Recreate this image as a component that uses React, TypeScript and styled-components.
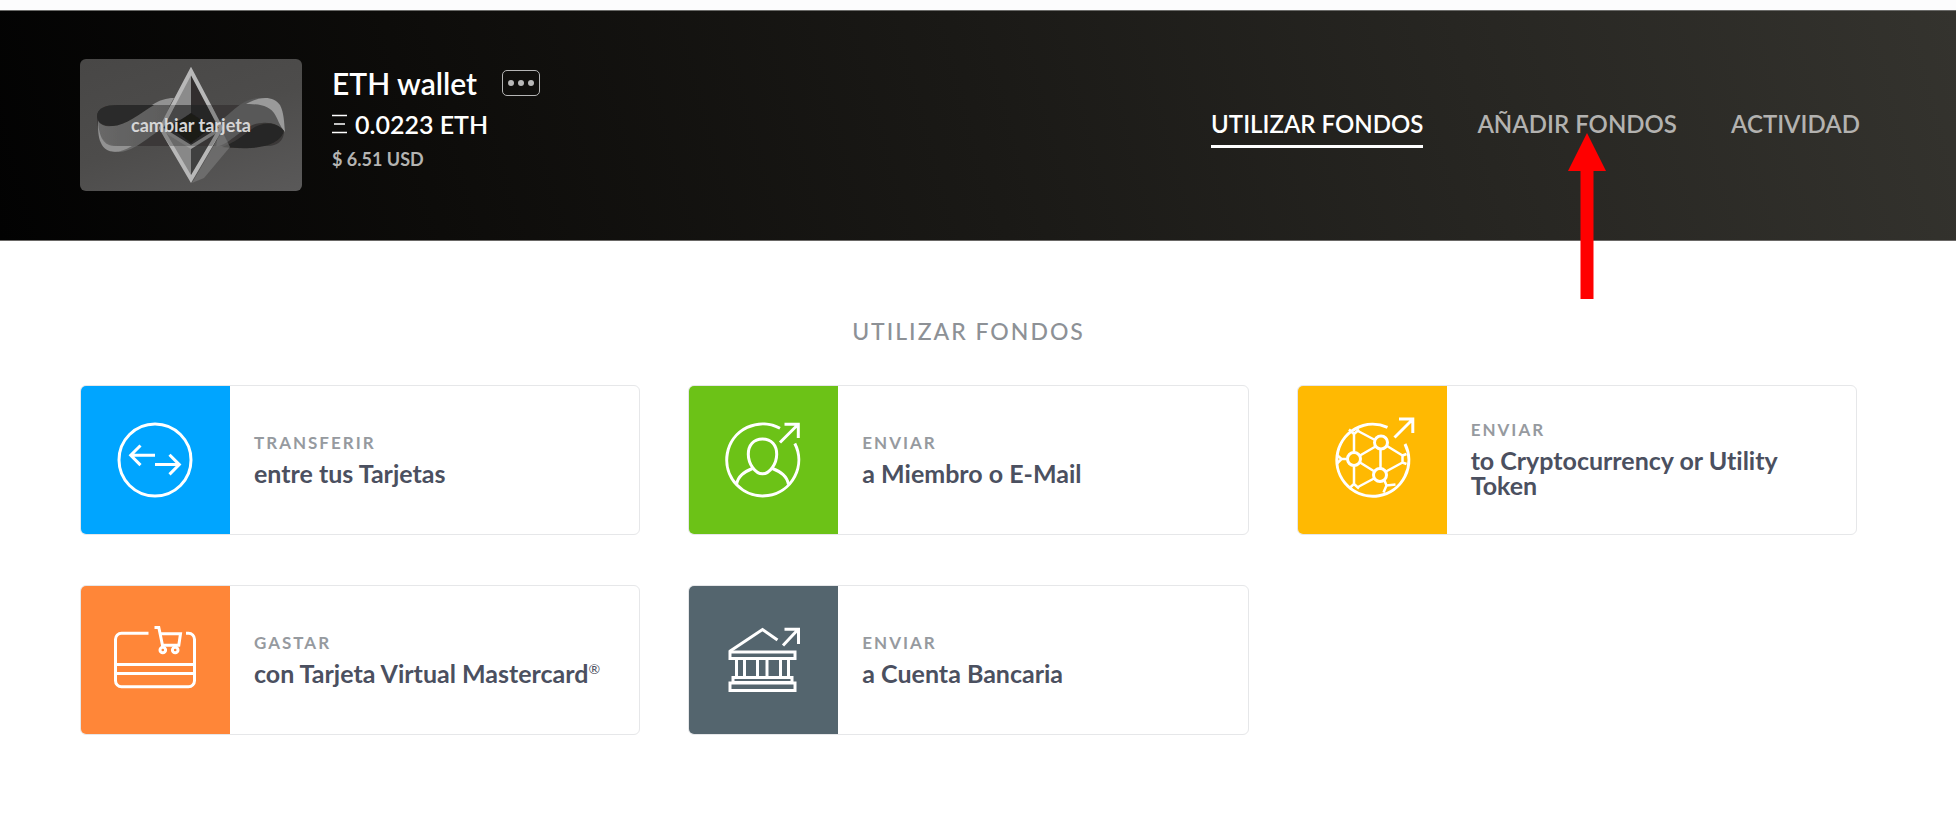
import React from "react";
import styled, { createGlobalStyle } from "styled-components";

const GlobalStyle = createGlobalStyle`
  *, *::before, *::after { box-sizing: border-box; }
  body {
    margin: 0;
    background: #fff;
    font-family: Lato, "Open Sans", sans-serif;
    font-variant-ligatures: none;
    color: #4b5060;
  }
`;

const Page = styled.div`
  border-top: 10px solid #fcfcfd;
`;

const Header = styled.header`
  display: flex;
  align-items: center;
  justify-content: space-between;
  gap: 32px;
  min-height: 231px;
  padding: 0 96px 2px 80px;
  border-top: 1px solid #6a6a68;
  border-bottom: 1px solid #6a6866;
  background: linear-gradient(75deg, #020202 0%, #0d0c0a 22%, #1a1916 50%, #272622 75%, #34332e 100%);
`;

const Wallet = styled.div`
  display: flex;
  align-items: center;
  gap: 30px;
`;

const ChangeCard = styled.button`
  display: grid;
  place-items: center;
  width: 222px;
  height: 132px;
  padding: 0;
  border: 0;
  border-radius: 6px;
  overflow: hidden;
  background: linear-gradient(160deg, #484746, #4d4c4b 50%, #5a5959);
  cursor: pointer;
  > * {
    grid-area: 1 / 1;
  }
`;

const ChangeLabel = styled.span`
  z-index: 1;
  font: 700 18px/24px Lato, sans-serif;
  color: #d6d6d6;
`;

const WalletInfo = styled.div`
  display: flex;
  flex-direction: column;
  padding-bottom: 14px;
  color: #fff;
`;

const NameRow = styled.div`
  display: flex;
  align-items: center;
  gap: 25px;
`;

const WalletName = styled.h1`
  margin: 0;
  font-size: 30px;
  line-height: 40px;
  font-weight: 600;
`;

const MoreButton = styled.button`
  display: flex;
  align-items: center;
  justify-content: center;
  gap: 4px;
  width: 38px;
  height: 26px;
  padding: 0;
  border: 1px solid #b5b5b5;
  border-radius: 5px;
  background: transparent;
  cursor: pointer;
`;

const Dot = styled.span`
  width: 6px;
  height: 6px;
  border-radius: 50%;
  background: #b9b9b9;
`;

const Balance = styled.p`
  display: flex;
  align-items: center;
  gap: 8px;
  margin: 0;
  font-size: 25px;
  line-height: 42px;
  font-weight: 600;
`;

const Fiat = styled.p`
  margin: 0;
  font-size: 18px;
  line-height: 28px;
  font-weight: 700;
  color: #b4b4b2;
`;

const Nav = styled.nav`
  display: flex;
  gap: 54px;
  padding-top: 5px;
`;

const NavItem = styled.div`
  position: relative;
`;

const NavLink = styled.a<{ $active?: boolean }>`
  display: block;
  padding: 2px 0 5px;
  border-bottom: 3px solid ${(p) => (p.$active ? "#fff" : "transparent")};
  font-size: 24px;
  line-height: 32px;
  font-weight: 600;
  white-space: nowrap;
  text-decoration: none;
  color: ${(p) => (p.$active ? "#fff" : "#b3b2b0")};
`;

const Pointer = styled.svg`
  position: absolute;
  z-index: 2;
  top: 27px;
  left: calc(50% - 10px);
  pointer-events: none;
`;

const Main = styled.main`
  padding: 75px 99px 48px 80px;
`;

const Heading = styled.h2`
  margin: 0 0 39px;
  text-align: center;
  font-size: 23px;
  line-height: 30px;
  font-weight: 500;
  letter-spacing: 2px;
  color: #8d9196;
`;

const Grid = styled.div`
  display: grid;
  grid-template-columns: repeat(3, minmax(0, 1fr));
  gap: 50px 48px;
`;

const Card = styled.a`
  display: flex;
  min-height: 150px;
  border: 1px solid #e6e7e9;
  border-radius: 6px;
  overflow: hidden;
  background: #fff;
  text-decoration: none;
  color: inherit;
`;

const Tile = styled.div<{ $color: string }>`
  flex: 0 0 149px;
  background: ${(p) => p.$color};
  svg {
    display: block;
  }
`;

const CardText = styled.div`
  display: flex;
  flex-direction: column;
  justify-content: center;
  gap: 6px;
  padding: 0 24px 4px;
`;

const Action = styled.span`
  font-size: 17px;
  line-height: 24px;
  font-weight: 700;
  letter-spacing: 2px;
  color: #969a9f;
`;

const Target = styled.span`
  font-size: 25px;
  line-height: 25px;
  font-weight: 700;
`;

const Registered = styled.sup`
  font-size: 14px;
  line-height: 0;
  font-weight: 400;
`;

const IconSvg = ({ children }: { children: React.ReactNode }) => (
  <svg width="148" height="148" viewBox="0 0 148 148" fill="none" stroke="#fff" strokeWidth="3" aria-hidden="true">
    {children}
  </svg>
);

const TransferIcon = () => (
  <IconSvg>
    <circle cx="74" cy="74" r="36" />
    <path d="M74 69.300H50M59.500 59.500 49.700 69.300l9.800 9.800M74 78.600h24M88.500 68.800l9.800 9.800-9.800 9.800" />
  </IconSvg>
);

const MemberIcon = () => (
  <IconSvg>
    <path d="M91 42.300A36 36 0 1 0 105.800 57.500" />
    <path d="M91 56.500 108.500 39M95.500 38.300h13.800V52" />
    <path d="M73.500 53c9 0 14.200 6.200 14.200 15.200 0 9-6.500 19.600-14.200 19.600S59.300 77.200 59.300 68.200C59.300 59.200 64.500 53 73.500 53Z" />
    <path d="M63.500 82.500C55 86 49 90 47.500 98.500M83.500 82.500C92 86 98 90 99.500 98.500" />
  </IconSvg>
);

const TokenIcon = () => (
  <IconSvg>
    <path d="M89.500 41.300A36 36 0 1 0 107 58" />
    <path d="M96.500 51.500 114 34M101 33h13.800v14" />
    <circle cx="83" cy="56.500" r="6.500" />
    <circle cx="56" cy="73" r="6.500" />
    <circle cx="82" cy="89" r="6.500" />
    <path
      strokeWidth="2.5"
      d="M56 66.500V48l-5-4.500M56 48l5-4.500M60 45l17 9M62 69.500l15.500-9M82.500 63v19.500M62 76.500l14.500 9M89 60l15.500 9.500M88 85.500l16.500-9M56 79.500V98l-5 4.500M56 98l5 4.500M60 101l16-8.500M49.500 73h-6L39 69M43.500 73l-4.500 4.500M86.500 94.500l2 5-3 7M88.500 99.500l9-1M104.500 68v10M104.500 69.500l4-1.500M104.500 76.500l4 1.500"
    />
  </IconSvg>
);

const VirtualCardIcon = () => (
  <IconSvg>
    <path d="M67.500 47.200H40.500a6 6 0 0 0-6 6v41.500a6 6 0 0 0 6 6h67a6 6 0 0 0 6-6V53.200a6 6 0 0 0-6-6H105M34.500 78.500h79M34.500 87.500h79" />
    <path d="M73.500 41.500h4.300l3.700 17.700h16.300l1.700-11.500H79.500" />
    <circle cx="81.800" cy="64" r="2.800" />
    <circle cx="94.200" cy="64" r="2.800" />
  </IconSvg>
);

const BankIcon = () => (
  <IconSvg>
    <path d="M40.500 65.500 73.500 43.500 88.500 54M94 59.500 109 43.500M95.500 43.300h14V58" />
    <path d="M41 66h65v6.500H41zM44 91.500h59v5H44zM41 97h65v7.500H41zM47.500 72.500v19M55.500 72.500v19M68.500 72.500v19M78 72.500v19M91.500 72.500v19M99.500 72.500v19" />
  </IconSvg>
);

const EtherArt = () => (
  <svg width="222" height="132" viewBox="0 0 222 132" aria-hidden="true">
    <defs>
      <filter id="soft" x="-10%" y="-10%" width="120%" height="120%">
        <feGaussianBlur stdDeviation="0.7" />
      </filter>
      <linearGradient id="ribbonL" x1="0" x2="1">
        <stop offset="0" stopColor="#777" />
        <stop offset="1" stopColor="#666" />
      </linearGradient>
    </defs>
    <g filter="url(#soft)">
      <path d="M17 58C17 50 24 46 38 46H186C198 48 204 60 204 74C203 82 197 87 188 87H40C26 87 17 78 17 58Z" fill="#3a3938" />
      <path d="M18 62C24 70 34 68 46 62C62 52 74 42 93 39L80 71C66 80 52 94 36 93C24 92 18 80 18 62Z" fill="url(#ribbonL)" opacity=".75" />
      <path d="M17 57C17 49 26 46 38 46H74C60 54 46 67 32 67C24 67 17 64 17 57Z" fill="#2b2a29" />
      <path d="M18 61C19 76 22 86 34 87H52C38 96 25 94 21 84C18 78 18 70 18 61Z" fill="#929292" />
      <path d="M72 46C80 41 86 39 94 39L90 46Z" fill="#929292" />
      <path d="M136 88C152 85 164 64 182 64C192 63 200 66 204 74C203 54 196 40 180 39C162 39 152 54 140 62Z" fill="#585858" />
      <path d="M166 45C182 36 194 38 200 46C204 54 204 62 205 73C199 66 198 60 194 54C188 46 178 45 166 45Z" fill="#9a9a9a" />
      <path d="M204 72C196 62 182 63 172 70C162 77 154 84 142 88C162 90 198 92 204 72Z" fill="#272625" />
      <path d="M142 72 112 124 124 119 150 88Z" fill="#858585" opacity=".5" />
      <path d="M111 14 82 69 111 56Z" fill="#8b8b8b" />
      <path d="M111 14V56L140 69Z" fill="#302f2e" />
      <path d="M95 46H127L140 69 111 88 82 69Z" fill="#222" opacity=".5" />
      <path d="M111 54 90 68 111 84 132 68Z" fill="#171716" />
      <path d="M82 72 111 88V119Z" fill="#888" />
      <path d="M140 72 111 88V119Z" fill="#414040" />
      <path d="M82 70 111 88 140 70" fill="none" stroke="#9c9c9c" strokeWidth="3.500" />
      <path d="M111 12 81 69 111 120 141 69Z" fill="none" stroke="#b8b8b8" strokeWidth="4" />
      <path d="M91 46H131L144 69 132 87H90L78 69Z" fill="#222" opacity=".3" />
    </g>
  </svg>
);

const actions = [
  { color: "#00a5ff", icon: <TransferIcon />, action: "TRANSFERIR", target: "entre tus Tarjetas" },
  { color: "#6cc217", icon: <MemberIcon />, action: "ENVIAR", target: "a Miembro o E-Mail" },
  { color: "#ffb902", icon: <TokenIcon />, action: "ENVIAR", target: "to Cryptocurrency or Utility Token" },
  {
    color: "#ff8638",
    icon: <VirtualCardIcon />,
    action: "GASTAR",
    target: (
      <>
        con Tarjeta Virtual Mastercard<Registered>®</Registered>
      </>
    ),
  },
  { color: "#54656e", icon: <BankIcon />, action: "ENVIAR", target: "a Cuenta Bancaria" },
];

export default function App() {
  return (
    <Page>
      <GlobalStyle />
      <Header>
        <Wallet>
          <ChangeCard type="button">
            <EtherArt />
            <ChangeLabel>cambiar tarjeta</ChangeLabel>
          </ChangeCard>
          <WalletInfo>
            <NameRow>
              <WalletName>ETH wallet</WalletName>
              <MoreButton type="button" aria-label="Más opciones">
                <Dot />
                <Dot />
                <Dot />
              </MoreButton>
            </NameRow>
            <Balance>
              <svg width="15" height="20" viewBox="0 0 15 20" stroke="#fff" strokeWidth="1.500" aria-hidden="true">
                <path d="M0 1.500h15M2 10h11M0 18.500h15" />
              </svg>
              0.0223 ETH
            </Balance>
            <Fiat>$ 6.51 USD</Fiat>
          </WalletInfo>
        </Wallet>
        <Nav>
          <NavItem>
            <NavLink href="#utilizar" $active aria-current="page">UTILIZAR FONDOS</NavLink>
          </NavItem>
          <NavItem>
            <NavLink href="#anadir">AÑADIR FONDOS</NavLink>
            <Pointer width="40" height="166" viewBox="0 0 40 166" fill="#f00" aria-hidden="true">
              <path d="M20 0 39 38H26.500V166H13.500V38H1Z" />
            </Pointer>
          </NavItem>
          <NavItem>
            <NavLink href="#actividad">ACTIVIDAD</NavLink>
          </NavItem>
        </Nav>
      </Header>
      <Main>
        <Heading>UTILIZAR FONDOS</Heading>
        <Grid>
          {actions.map((a, i) => (
            <Card href="#accion" key={i}>
              <Tile $color={a.color}>{a.icon}</Tile>
              <CardText>
                <Action>{a.action}</Action>
                <Target>{a.target}</Target>
              </CardText>
            </Card>
          ))}
        </Grid>
      </Main>
    </Page>
  );
}
